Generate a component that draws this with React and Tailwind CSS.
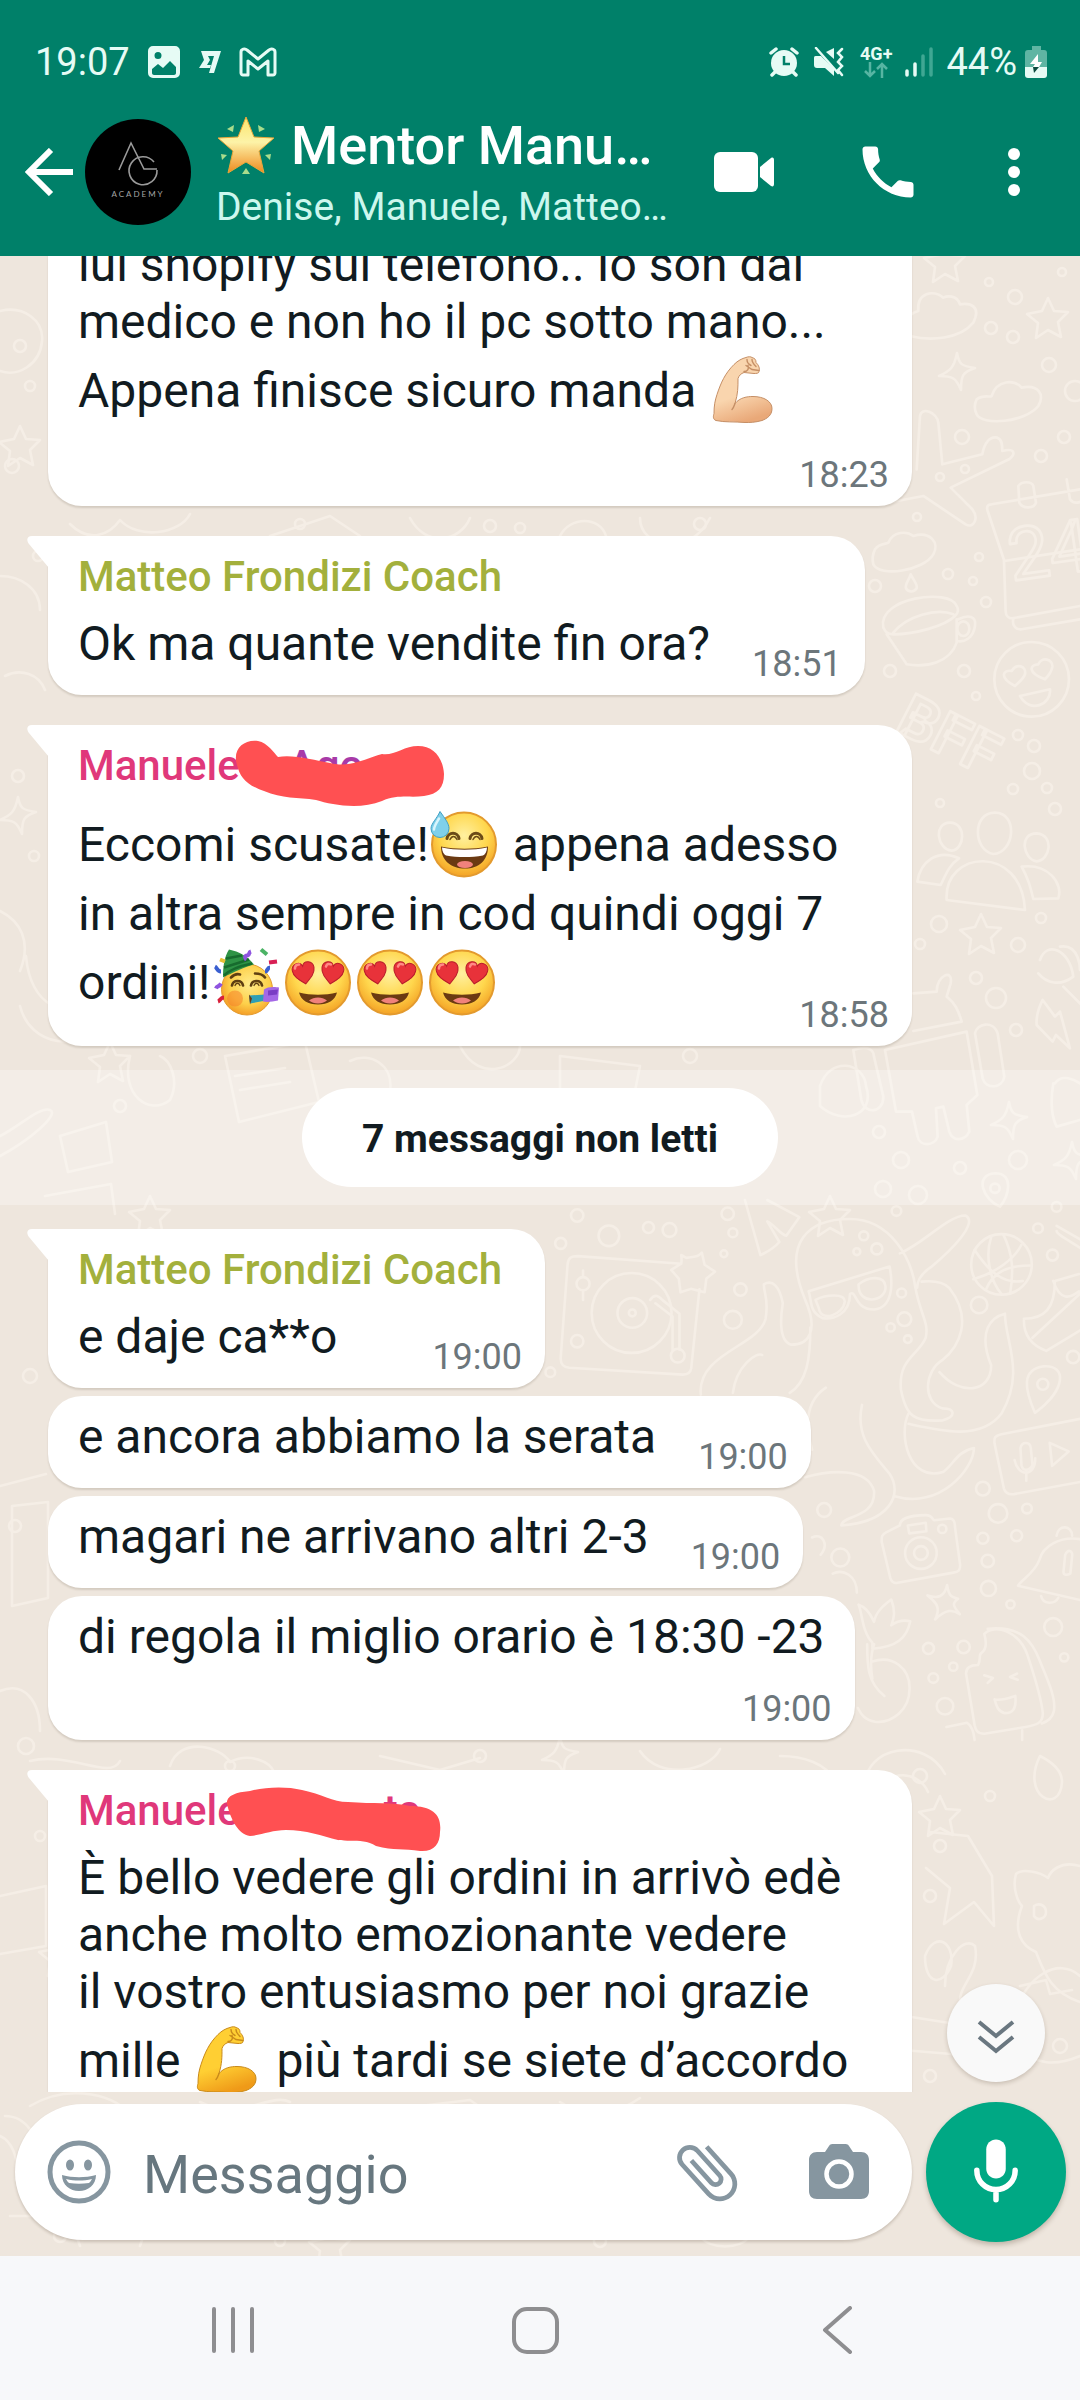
import { useState } from 'react';

const SKIN = {
  light: ['#f9d5ae', '#e9a878', '#c58f66'],
  yellow: ['#ffcf33', '#ef9a18', '#c98a1a'],
};

const Face = ({ id }) => (
  <>
    <defs>
      <radialGradient id={id} cx="50%" cy="36%" r="68%">
        <stop offset="0" stopColor="#fff0a0" />
        <stop offset="0.55" stopColor="#ffd74d" />
        <stop offset="1" stopColor="#f29a1f" />
      </radialGradient>
    </defs>
    <circle cx="35" cy="36" r="32" fill={`url(#${id})`} stroke="#e39a2e" strokeWidth="2" />
  </>
);

const emojiClass = 'inline-block h-[81px] w-[72px] align-[-24px]';

const SweatSmile = () => (
  <svg viewBox="0 0 72 72" role="img" aria-label="sweat smile" className={emojiClass}>
    <Face id="sweat" />
    <g fill="none" stroke="#6b4a17" strokeWidth="3" strokeLinecap="round">
      <path d="M18 30c1-7 11-7 12 0M41 30c1-7 11-7 12 0" />
      <path d="M21 31c2-4 5-4 7 0M44 31c2-4 5-4 7 0" strokeWidth="1.5" />
    </g>
    <path d="M12 38c14 3 33 3 47 0 0 14-9 22-23 22S12 52 12 38z" fill="#6b3a12" />
    <path d="M13 39c14 3 31 3 45 0 0 4-2 7-4 8-12 2-25 2-37 0-2-1-4-4-4-8z" fill="#fff" />
    <ellipse cx="36" cy="56" rx="8" ry="3.5" fill="#f0827c" />
    <path d="M11 3c5 7 9 12 9 17a9 9 0 0 1-18 0C2 15 8 10 11 3z" fill="#7fd0ea" stroke="#3f9fc4" strokeWidth="1" />
    <path d="M10 10c-3 5-5 8-5 11" fill="none" stroke="#d9f5fc" strokeWidth="2.5" strokeLinecap="round" />
  </svg>
);

const HEART = 'M0 13C-6 8-11 4-11-2c0-7 9-9 11-3 2-6 11-4 11 3C11 4 6 8 0 13z';

const HeartEyes = ({ id }) => (
  <svg viewBox="0 0 72 72" role="img" aria-label="heart eyes" className={emojiClass}>
    <Face id={id} />
    <g fill="#e8323a" stroke="#b81c2b" strokeWidth="1">
      <path d={HEART} transform="translate(20.5 24.5) rotate(-10)" />
      <path d={HEART} transform="translate(49.5 24.5) rotate(10)" />
    </g>
    <g fill="none" stroke="#ff8a86" strokeWidth="2.5" strokeLinecap="round">
      <path d="M12 22c0-3 2-4 4-4M43 20c1-3 3-3 5-2" />
    </g>
    <path d="M16 46c12 3 26 3 38 0-2 8-9 12-19 12s-17-4-19-12z" fill="#6b3a12" />
    <path d="M26 54c5-4 13-4 18 0-5 4-13 4-18 0z" fill="#f0827c" />
  </svg>
);

const Party = () => (
  <svg viewBox="0 0 72 72" role="img" aria-label="party" className={emojiClass}>
    <defs>
      <radialGradient id="party" cx="55%" cy="40%" r="65%">
        <stop offset="0" stopColor="#ffeb8a" />
        <stop offset="0.6" stopColor="#fdd04a" />
        <stop offset="1" stopColor="#f29420" />
      </radialGradient>
    </defs>
    <circle cx="36" cy="43" r="25.5" fill="url(#party)" stroke="#e39a2e" strokeWidth="1" />
    <circle cx="24" cy="52" r="8" fill="#f5822a" opacity="0.55" />
    <path d="M18 3c10 2 19 7 25 15-9 2-21 8-31 13 0-10 1-20 6-28z" fill="#2e9345" />
    <path d="M15 12l16-3M13 21l25-8M13 29c7-7 18-10 28-12" fill="none" stroke="#176b2e" strokeWidth="2.5" />
    <g fill="none" stroke="#5f3f12" strokeWidth="2.6" strokeLinecap="round">
      <path d="M21 39c1-6 10-6 11 0M40 39c1-6 10-6 11 0M20 31c3-3 6-4 9-3M44 27c4 0 8 1 10 4" />
      <path d="M24 39c1-3 4-3 5 0M43 39c1-3 4-3 5 0" strokeWidth="1.3" />
    </g>
    <path d="M38 49l16-1 1 6-16 3z" fill="#2f9fb5" />
    <path d="M38 48l3 4-2 6z" fill="#6b3a12" />
    <path d="M53 43c3-3 11-3 15-2l-1 13c-5 1-11 2-15 1z" fill="#a468e6" />
    <path d="M57 44l10-1-1 5-9 1z" fill="#7a3dc4" />
    <g fill="none" strokeWidth="4">
      <path d="M33 13c2-1 0-4 3-4s1-3 4-4" stroke="#8f54e0" />
      <path d="M50 3l6 5" stroke="#4bb365" />
      <path d="M58 16l8-1" stroke="#d81f55" />
      <path d="M54 25c3 0 2-4 5-4" stroke="#3a5fd0" />
      <path d="M4 20c2 1 2 5 6 5" stroke="#3a5fd0" />
      <path d="M5 42c1-3 3-1 5-5" stroke="#8f54e0" />
      <path d="M7 55c3-1 2-4 6-4" stroke="#d8203a" />
      <path d="M9 13l5 2" stroke="#e8c136" />
    </g>
  </svg>
);

const Arm = ({ tone }) => {
  const [top, low, line] = SKIN[tone];
  return (
    <svg viewBox="0 0 72 72" role="img" aria-label="muscle" className={emojiClass}>
      <defs>
        <linearGradient id={`arm-${tone}`} x1="0.2" y1="0" x2="0.5" y2="1">
          <stop offset="0" stopColor={top} />
          <stop offset="0.6" stopColor={top} />
          <stop offset="1" stopColor={low} />
        </linearGradient>
      </defs>
      <path
        d="M26 10c4-4 8-6 12-7 2-1 5-1 6 0 3 1 4 2 4 5 3 3 4 6 3 9 0 2-3 2-5 2l-10-1c-3 1-5 3-6 6 0 9 0 15-3 25 5-6 12-7 18-7 11 0 19 5 19 12 0 7-5 10-10 12-7 2-12 2-17 2-11-1-20 0-29-2-3-1-3-4-2-7 0-8 1-13 3-19 4-12 8-21 17-30z"
        fill={`url(#arm-${tone})`}
        stroke={line}
        strokeWidth="1"
      />
      <path d="M27 49c-1 3-2 5-3 6M36 17c4 0 5-3 4-6M39 5c0 3 2 5 4 6M44 5c0 3 2 5 4 7M38 11l6 4 7 1" fill="none" stroke={line} strokeWidth="1.4" strokeLinecap="round" />
    </svg>
  );
};

const GlowingStar = () => (
  <svg viewBox="0 0 60 60" role="img" aria-label="star" className="h-[60px] w-[60px] shrink-0">
    <defs>
      <linearGradient id="star" x1="0" y1="0" x2="0" y2="1">
        <stop offset="0" stopColor="#fbe56a" />
        <stop offset="0.45" stopColor="#fdf3a8" />
        <stop offset="1" stopColor="#f08a1e" />
      </linearGradient>
    </defs>
    <path d="M30 1l8 20 20 1-15 13 5 22-18-11-18 11 5-22L2 22l20-1z" fill="url(#star)" stroke="#e9a63a" strokeWidth="1" strokeLinejoin="round" />
    <path d="M11 13l7-4-1 7zM49 13l-7-4 1 7zM5 38l6 1-5 5zM55 38l-6 1 5 5zM30 52l4 6h-8z" fill="#a9dc8c" />
  </svg>
);

const STAR = 'M0-20l6 13 14 1-10 10 3 15-13-7-12 8 2-15-11-9 15-3z';
const SPARKLE = 'M0-19c2 11 4 13 18 15C6 0 4 3 4 18-1 6-4 4-18 4-7-1-3-4 0-19z';

const dots = [
  [989, 26, 4], [1062, 16, 4], [1015, 41, 7], [991, 72, 6], [1013, 81, 6], [1049, 109, 7], [962, 181, 7], [1064, 181, 6],
  [1041, 200, 6], [1075, 135, 10], [965, 213, 4], [940, 221, 4], [917, 261, 4], [979, 301, 4], [948, 318, 5], [973, 325, 4],
  [986, 346, 5], [875, 330, 6], [890, 415, 6], [964, 415, 6], [976, 440, 4], [1018, 479, 5], [1034, 490, 6], [1032, 515, 8],
  [1013, 533, 5], [1047, 532, 5], [940, 547, 4], [1055, 553, 6], [939, 668, 8], [1041, 662, 5], [1018, 689, 7], [920, 688, 5],
  [976, 722, 6], [996, 742, 10], [1016, 774, 6], [879, 876, 6], [901, 904, 8], [1018, 904, 9], [960, 912, 6], [918, 939, 9],
  [883, 933, 8], [20, 90, 6], [30, 130, 5], [12, 210, 7], [38, 300, 5], [18, 520, 6], [34, 600, 5], [300, 268, 5],
  [490, 270, 6], [520, 272, 5], [700, 268, 6], [30, 1120, 7], [15, 1270, 6], [26, 1490, 8], [40, 1580, 5], [200, 800, 7],
  [120, 850, 6], [690, 800, 7], [760, 880, 6], [230, 1510, 5], [480, 1500, 6], [920, 1520, 7], [990, 1540, 5],
  [940, 1590, 6], [930, 1640, 6], [1060, 1790, 7], [930, 1820, 6], [60, 1980, 6], [280, 1985, 5], [600, 1985, 6],
];

const deckDots = [
  [108, 45, 18], [60, 126, 16], [200, 104, 30], [315, 80, 16], [376, 87, 20], [545, 40, 18], [560, 95, 13], [534, 156, 10],
  [582, 260, 18], [560, 348, 26], [108, 410, 18], [30, 500, 14], [940, 104, 13], [978, 142, 16], [920, 150, 10], [1050, 270, 13],
  [1058, 346, 20], [1018, 370, 12], [1068, 404, 11], [1035, 32, 14], [1446, 82, 14], [1488, 160, 16], [1500, 20, 14],
  [1275, 305, 24], [1548, 456, 18], [1286, 838, 20], [1330, 910, 27], [1414, 896, 14], [1286, 982, 16], [1384, 975, 16],
  [1300, 1048, 18], [1302, 1128, 22], [1366, 1174, 12], [1128, 1302, 16], [1230, 1298, 18], [1200, 1355, 12], [1142, 1388, 14],
  [1176, 1470, 24], [1490, 1240, 26], [1522, 1328, 12], [825, 900, 20], [872, 1038, 26],
];

const Wallpaper = () => (
  <svg
    viewBox="0 0 1080 2000"
    preserveAspectRatio="xMidYMin slice"
    aria-hidden="true"
    className="absolute inset-0 h-full w-full bg-[#eee6dd]"
    fill="none"
    stroke="#f5eee6"
    strokeWidth="2.6"
    strokeLinecap="round"
    strokeLinejoin="round"
  >
    {dots.map(([x, y, r]) => (
      <circle key={`${x}-${y}`} cx={x} cy={y} r={r} />
    ))}
    {[[945, 6], [1048, 62], [981, 678], [20, 190], [110, 806], [150, 960], [830, 960], [60, 1700], [940, 1560], [330, 1990]].map(([x, y]) => (
      <path key={`${x}-${y}`} d={STAR} transform={`translate(${x} ${y})`} />
    ))}
    {[[957, 116], [1009, 865], [1072, 905], [18, 560], [560, 1500]].map(([x, y]) => (
      <path key={`${x}-${y}`} d={SPARKLE} transform={`translate(${x} ${y})`} />
    ))}

    {/* clouds, plane, calendar, cup, smiley */}
    <g transform="translate(860 0) scale(.3333)" strokeWidth="8">
      <path d="M150 240c60 15 150 10 190-40 25-50-10-60-40-55-10-30-40-25-50-20-30-25-80-15-75 40-40 10-50 60-25 75z" />
      <path d="M350 430c20-15 40-5 45-10 15-50 70-50 90-25 50-10 70 20 50 55-40 50-170 60-185 25-10-20-5-35 0-45z" />
      <path d="M45 880c15-20 35-15 40-20 15-35 55-35 75-20 50-15 80 20 60 55-30 50-160 70-180 30-5-20 0-35 5-45z" />
      <path d="M170 640l10-160c5-30 50-10 55 20l12 125 120-30c5-30 20-55 45-50 15 5 15 25 15 40 40-10 40 10 20 25l-175 85 65 65c20 25 5 60-20 45L190 720 60 745" />
      <path d="M660 700l-265 45c-15 0-15 10-12 20l50 150 227-35M432 915l5 150c0 15 10 22 20 22l203-37M460 1090c-5 20 10 32 25 30l175-30M475 690c10-15 40-15 45 0l8 50c-5 18-40 20-50 0zM620 670l10 60c10 15 30 10 35 5" />
      <path d="M70 1115c-20-90 200-120 220-65 10 15 0 25-5 30-30 30-120 55-185 55-20 0-25-10-30-20zM80 1135l60 90c60 10 130-5 150-65v-70M295 1090c30-15 55-10 50 20-5 35-30 50-55 45M100 1130c40-50 130-75 180-55" />
      <ellipse cx="310" cy="1118" rx="18" ry="22" />
      <path d="M152 955c10 20 22 32 18 42-10 15-28 10-32 0-4-12 8-22 14-42z" />
      <circle cx="515" cy="1270" r="112" />
      <path d="M465 1290c-50-25-35-50-10-45 15-25 45-15 40 10-5 15-20 25-30 35zM555 1270c-55-20-45-45-20-45 10-25 45-15 42 8-3 17-12 27-22 37zM480 1320l90-20c5 45-60 75-90 20z" />
      <text x="455" y="975" fontSize="220" fontFamily="Roboto" transform="rotate(-8 455 975)">24</text>
    </g>

    {/* friends, robot, bolt, pin */}
    <g transform="translate(860 434) scale(.3333)" strokeWidth="8">
      <text x="100" y="120" fontSize="180" fontWeight="700" fontFamily="Roboto" transform="rotate(27 100 120)">BFF</text>
      <path d="M405 368c70 0 60 120-5 124-60-10-65-124 5-124zM270 398c50 0 45 80 5 84-45-5-55-84-5-84zM530 430c55 5 40 82 0 84-40-5-55-84 0-84z" />
      <path d="M260 630c-10-150 225-170 235 30z M172 575c10-60 60-100 125-70-30 20-40 50-55 80zM485 530c80-10 125 50 110 95l-75 2c-10-40-15-60-35-97z" />
      <path d="M75 1080l245-55 32 190-32 30 8 80c-15 30-50 30-60 0l-18-75-22 5 5 85c-10 30-55 30-60 0l-17-75h-48zM160 910l70-5c0-50 50-70 42-25l-12 40c25 20 35 40 45 75l-145 28M345 1030c5-30 55-40 68 0l20 130c-5 35-55 40-65 5zM-20 1080c30-10 60-10 62 20l28 120c0 50-55 55-66 10z" />
      <path d="M548 930c-15 30-20 50-18 75l48 50 10-20 42 40-30-110-15 15zM405 1450c60 0 40 70 15 100-50-20-80-95-15-100z" />
      <circle cx="405" cy="1495" r="14" />
      <path d="M600 770c60-10 60 70 60 70M540 810c20-60 90-30 100 50-40 30-80 20-105-10M610 890l60 60M585 1180c20-30 60-10 75 0M580 1180c-10 60-5 100 10 130l70-20" />
    </g>

    {/* turntable, octopus, ball, camera, bell */}
    <g transform="translate(540 944) scale(.3444)" strokeWidth="7.5">
      {deckDots.map(([x, y, r]) => (
        <circle key={`${x}-${y}`} cx={x} cy={y} r={r} />
      ))}
      <path d="M410 185L110 163c-20 0-28 5-30 25L60 460c0 20 10 25 25 27l330 20c15 0 22-5 24-18l24-230M410 185c5-30-10-30 15-17 25-5 30 0 45-15l8 35 30 20-25 20-5 40-40-10-30 10-5-40-22-25z" />
      <circle cx="266" cy="328" r="116" />
      <circle cx="268" cy="328" r="43" />
      <circle cx="268" cy="328" r="10" />
      <circle cx="125" cy="243" r="19" />
      <path d="M125 205v18M125 262v28M320 290c15-20 25-10 35 0l50 40v105M335 300l50 38v98" />
      <circle cx="400" cy="452" r="20" />
      <path d="M595 0l45 160c20-10 35-15 55-38l-35-60c15 5 40 40 55 42l38-54L660 0" />
      <path d="M770 290C700 120 780 55 900 55c120 0 180 120 190 200 15 80 40 100 30 145-20 50-80 60-72 150 15 80 40 95 120 90 40-10 40-35 0-35-60-20-50-110 0-140 50-40 90-120 20-210-20-20-60-20-80-18M770 290c40 90 10 130-40 130-40-10-30-90-25-120-10-50-30-70-55-55 0 30 15 40 5 100-20 80-200 100-188 220M785 370c0 90-10 160-60 190M560 560c10-80 70-120 85-110M1045 155c70-30 140-110 190-110 40 20-40 100-100 150-30 20-40 40-40 60M1160 500c60 70 150 60 150-20-40-100 0-140 40-150 0 80 60 170-10 290-60 80-180 50-270 30M1070 620c-30 60 0 200 100 170 30-20 40-60 90-70 0 60-100 180-230 140M830 545c-60 40-60 110-40 180M935 595c-20 90 30 140 80 200 40 60 0 140-140 150 0-30 100-20 95-100-20-70-130-60-200-40" />
      <path d="M780 265l235-72c10 50 10 120-45 125-60 0-50-60-70-45 0 60-50 75-80 70-40-20-30-50-40-78zM800 290c30-15 85-20 85 5-5 40-70 60-75 20zM925 245c30-25 75-25 78 5 5 45-80 60-78-5z" />
      <circle cx="1340" cy="187" r="88" />
      <path d="M1345 100c30 60 30 110 20 172M1262 145c40 60 80 100 140 90M1258 230c70-20 120-60 140-100M1310 108c-20 60 0 130 30 165M1425 190c-70 0-110 20-130 70" />
      <path d="M1005 965l40-20c0-20 30-30 75-30 20 0 20 15 25 15l45-5c15 0 15 15 15 25l15 110c0 15-5 20-20 22l-165 30c-10 0-15-5-18-15l-25-105c0-15 0-20 13-27zM1068 945l52-8 2 25-50 6z" />
      <circle cx="1106" cy="1025" r="46" />
      <circle cx="1106" cy="1025" r="20" />
      <circle cx="1168" cy="955" r="12" />
      <path d="M1182 1118c5 30 10 35 32 40-22 15-10 25 5 45-20-15-40-15-72 15 15-30 10-45-22-70 30 10 50 5 57-30z" />
      <path d="M1570 985c-60-10-110 20-120 60-15 40-50 55-62 75l182 42M1500 975c5-35 45-30 45 0M1525 1030c10-20 22-10 20 5l-5 50c-10 5-20 5-20-5zM1455 1150c5 25 40 25 50 5" />
      <path d="M1570 635l-230 45c-20 5-22 10-20 28l27 130c5 15 15 18 30 16l195-36M1395 720c5-20 28-18 30 0l5 50c-10 18-28 18-32 0zM1378 755c10 50 60 50 60-5M1412 790v25M1480 705l55 25-48 42z" />
      <path d="M1462 483c70-5 65 70-25 135-30-70-40-125 25-135z" />
      <circle cx="1460" cy="535" r="16" />
      <path d="M1500 75l70 40M1500 90c0 10 40 30 70 50M1405 345c60 0 90-30 90-110l70-20M1405 350c0 50 30 75 65 88l100-60M1430 400l140-130M1490 235c20 60 50 50 75 30" />
      <path d="M1290 1260c30-30 100-10 125 60 20 60 40 120 45 170 0 30-20 35-50 40l-120 20c-20 0-25-10-28-25l-25-150c0-15 10-25 35-25 10-15 0-30 10-35 15-10 15-30 8-55zM1300 1245c100-10 130 40 150 90 20 50 50 110 42 150-5 20-20 30-35 35M1290 1380l25 8-15 14M1385 1375l-20 10 22 8M1320 1450c20 5 45-5 60-10 5 40-10 50-30 50-20-5-25-20-30-40" />
      <path d="M965 1285c-30-30-30-90-40-110 30 10 40 40 45 50 5-30 30-50 50-65 15 40 5 60 0 75 20-15 40-15 55-12-10 50-40 75-110 80zM950 1290c0 60 0 110 50 150M970 1290c-10 30-10 70-5 100M965 1340c60-20 110 20 108 80 0 60-50 100-100 95-30-5-40-20-50-40M920 1140c0-50-40-70-70-55M790 980c30-15 50 20 25 50M1180 1530l60-12c15 10 20 30 22 50M1400 1540v28" />
    </g>

    {/* cat, cactus, teddy in the lower corner */}
    <path d="M1080 1610c-20-6-30 6-32 12-8-6-26-10-32-4-4 14 2 28 6 32-10 26 0 40 14 46 8 20 14 40 44 50M1034 1650c6-4 12 0 12 6s-8 10-12 4zM930 1576l38 4 24 40 2 50-20-24-30 22 6-36-24-20M925 1700c10-26 30-14 26 10-8 20-26 20-26-10zM945 1730c0-30 20-50 30-40 6 30-20 40-14 60M905 1760l64 10 6 30-72-6zM1014 1760c12-40 44-60 66-40M1016 1790c20 20 40 20 64 10M1020 1730l26-6 4 14 22-4" />
    <path d="M865 1530c0-40 60-50 80-12M880 1540c6-30 40-24 48-4M780 1500c20 0 50 6 56 30M1040 1500c-20 40 20 60 22 26 0-14-14-22-22-26z" />

    {/* peeking out along the left edge and between bubbles */}
    <path d="M0 55c24-6 44 10 42 30-2 24-24 36-42 30M0 320c20 0 40 12 40 34M5 420c16-8 34-2 40 14M0 655c20 10 32 30 20 60M20 750c10 40 60 50 90 10M26 700c4 50 40 66 66 40M0 1230l46-12M12 1250l36-4v96l-36 8zM0 1435c24-10 40 10 40 40M0 1640l46-10v60l-46 8M5 1860c20 0 36 20 34 50M0 1880c10 4 20 20 16 44M10 1960h60l10 30M180 1976l50 6" />
    <path d="M70 268c20 20 40 10 50-4 18 20 60 14 70-6M270 280l60-20 30 20M410 262c16 30 50 24 60 0M560 280c10-20 40-20 46 0M640 262c0 30 50 40 70 0M225 800l80-14 14 60-80 20zM235 820l50-8M240 834l50-8M350 805c20-10 44 4 40 30M460 790c20 40 60 20 60 0M560 800l80 10-10 50-70-10zM60 880l46-14 6 40-44 10zM130 800c-10 40 20 60 40 44 10-20 0-40-10-44M0 880c20-10 40-30 50-26s-20 30-50 46M45 940l66-12 4 30M560 700l20 20M820 830c10-30 44-24 46 0 10 30-24 40-46 20z" />
    <path d="M30 1505c40-10 80 20 90 0M170 1510c10-30 50-20 60-4 20-10 40 0 44 10M380 1500l60 14 40-12M640 1495c20 30 70 20 80-2M30 1850c40-24 90-10 100 10M200 1846c40 20 70-10 90 0M420 1850l50-6 20 14M560 1846c30 20 60 10 80-4M140 1990l4-12 64-4M700 1980c10 14 40 14 50 0" />
  </svg>
);

const groups = [
  {
    id: 1,
    messages: [
      { wide: true, time: '18:23', stacked: true, lines: ['lui shopify sul telefono.. Io son dal', 'medico e non ho il pc sotto mano...', <>Appena finisce sicuro manda <Arm tone="light" /></>] },
    ],
  },
  { id: 2, name: 'matteo', messages: [{ time: '18:51', lines: ['Ok ma quante vendite fin ora?'] }] },
  {
    id: 3,
    name: 'manuele',
    scribble: 'M7 28C2 12 14 2 28 4c10 2 16 12 20 16 14-3 36 3 52 6 20 5 34-4 52-9 12 2 22-8 36-8 16 0 25 12 26 28 0 14-6 20-20 22-14 2-26-2-42 5-22 9-50 4-66-1-18-3-34-1-52-9C16 48 10 40 7 28z',
    peek: 'Ago',
    messages: [
      { wide: true, time: '18:58', lines: [<>Eccomi scusate!<SweatSmile /> appena adesso</>, 'in altra sempre in cod quindi oggi 7', <>ordini!<Party /><HeartEyes id="love-a" /><HeartEyes id="love-b" /><HeartEyes id="love-c" /></>] },
    ],
  },
];

const unread = [
  {
    id: 4,
    name: 'matteo',
    messages: [
      { time: '19:00', lines: ['e daje ca**o'] },
      { time: '19:00', lines: ['e ancora abbiamo la serata'] },
      { time: '19:00', lines: ['magari ne arrivano altri 2-3'] },
      { time: '19:00', stacked: true, lines: ['di regola il miglio orario è 18:30 -23'] },
    ],
  },
  {
    id: 5,
    name: 'manuele',
    scribble: 'M-3 22C-4 12 10 10 20 9 34 5 56 4 72 8c20 4 30 12 46 12 26 2 44 0 62 4 24 0 32 10 30 26 0 12-6 20-20 19-16-3-26 0-44-5-12-8-26-4-38-6C92 54 76 48 56 48c-14 0-24 5-36 6C8 52 1 38-3 22z',
    peek: 'to',
    messages: [
      { wide: true, time: '19:05', stacked: true, lines: ['È bello vedere gli ordini in arrivò edè', 'anche molto emozionante vedere', 'il vostro entusiasmo per noi grazie', <>mille <Arm tone="yellow" /> più tardi se siete d’accordo</>] },
    ],
  },
];

const Sender = ({ group }) => {
  if (group.name === 'matteo') {
    return <div className="mb-[10px] pr-5 text-[42px] leading-[57px] font-medium text-[#a3b03c]">Matteo Frondizi Coach</div>;
  }
  return (
    <div className="mb-[10px] text-[42px] leading-[57px] font-medium text-[#e0387a]">
      Manuele
      <span className={group.peek === 'Ago' ? 'ml-12 text-[#a83aa8]' : 'ml-36'}>{group.peek}</span>
      <svg viewBox="0 0 216 72" aria-hidden="true" className="absolute top-3 left-[182px] h-[72px] w-[216px] overflow-visible">
        <path d={group.scribble} fill="#ff5052" />
      </svg>
    </div>
  );
};

const Time = ({ children }) => <time className="text-[36px] leading-[36px] text-[#6c767b]">{children}</time>;

const Bubble = ({ message, group, first }) => {
  const tail = first && group.name;
  const last = message.lines.length - 1;

  return (
    <div
      className={`relative max-w-full rounded-[34px] bg-white pt-3 pr-[23px] pb-[13px] pl-[30px] shadow-[0_2px_2px_rgba(60,40,20,0.14)] ${
        message.wide ? 'w-full' : 'w-fit'
      } ${tail ? 'rounded-tl-none' : ''}`}
    >
      {tail && (
        <svg viewBox="0 0 22 32" aria-hidden="true" className="absolute top-0 -left-[21px] h-8 w-[22px]">
          <path d="M22 0H5C0 0-1 4 2 8l20 24z" fill="#fff" />
        </svg>
      )}
      {tail && <Sender group={group} />}
      {message.lines.map((line, index) => (
        <div key={index} className="flex items-end justify-between gap-[35px] text-[48px] leading-[57px] whitespace-nowrap text-[#111b21]">
          <p className={index === last && !message.stacked ? 'mb-[10px] pr-[7px]' : 'pr-[7px]'}>{line}</p>
          {index === last && !message.stacked && <Time>{message.time}</Time>}
        </div>
      ))}
      {message.stacked && (
        <div className="flex h-[62px] items-end justify-end">
          <Time>{message.time}</Time>
        </div>
      )}
    </div>
  );
};

const Group = ({ group }) => (
  <section className="flex flex-col gap-2 pr-[168px] pl-12">
    {group.messages.map((message, index) => (
      <Bubble key={index} message={message} group={group} first={index === 0} />
    ))}
  </section>
);

const StatusBar = () => (
  <div className="flex h-[86px] items-center justify-between pt-[38px] pr-[33px] pl-[35px] text-[38px] leading-[48px] text-[#e6fbf5]">
    <div className="flex items-center">
      <span>19:07</span>
      <svg viewBox="0 0 32 32" aria-hidden="true" className="ml-[18px] h-8 w-8">
        <path fillRule="evenodd" fill="#e6fbf5" d="M5 0h22a5 5 0 0 1 5 5v22a5 5 0 0 1-5 5H5a5 5 0 0 1-5-5V5a5 5 0 0 1 5-5zM4 23v4c0 1 1 2 2 2h20c1 0 2-1 2-2v-6l-6-6-7 7-5-4zM10 6a3.500 3.500 0 1 0 0 7 3.500 3.500 0 0 0 0-7z" />
      </svg>
      <svg viewBox="0 0 22 24" aria-hidden="true" className="ml-[19px] h-6 w-[22px]">
        <path fill="#e6fbf5" d="M2 1h20l-7 22h-5l5-17H9l2 4-3 5h4l-1 3H0l5-8z" />
      </svg>
      <svg viewBox="0 0 38 30" aria-hidden="true" className="ml-[18px] h-[30px] w-[38px]">
        <path fill="none" stroke="#e6fbf5" strokeWidth="3" strokeLinejoin="round" d="M2 26V5c0-3 4-4 6-2l11 9L30 3c2-2 6-1 6 2v21c0 1-1 2-2 2h-5V14l-10 8-10-8v14H4c-1 0-2-1-2-2z" />
      </svg>
    </div>
    <div className="flex items-center">
      <svg viewBox="0 0 30 30" aria-hidden="true" className="h-[30px] w-[30px]">
        <g stroke="#e6fbf5" strokeWidth="3.500" strokeLinecap="round">
          <path d="M2 6l5-4M28 6l-5-4M6 25l-3 3M24 25l3 3" />
        </g>
        <circle cx="15" cy="16" r="13" fill="#e6fbf5" />
        <path d="M15 9v8h6" fill="none" stroke="#008069" strokeWidth="2.500" />
      </svg>
      <svg viewBox="0 0 32 30" aria-hidden="true" className="ml-[14px] h-[30px] w-8">
        <path d="M21 1v11l-8-7zM1 11c0-2 1-2 3-2h4l13 13v7l-9-8H4c-2 0-3-1-3-3z" fill="#e6fbf5" />
        <path d="M3 1l22 25M29 2l-4 4 4 4-4 5 4 4-4 4 4 5" fill="none" stroke="#e6fbf5" strokeWidth="2.500" strokeLinecap="round" />
      </svg>
      <div className="ml-[15px] flex flex-col items-center text-[18px] leading-4 font-bold">
        4G+
        <svg viewBox="0 0 24 16" aria-hidden="true" className="h-4 w-6" fill="none" stroke="#57b5a3" strokeWidth="2.500">
          <path d="M6 0v14M1 9l5 5 5-5M18 16V2M13 7l5-5 5 5" />
        </svg>
      </div>
      <svg viewBox="0 0 28 30" aria-hidden="true" className="ml-[13px] h-[30px] w-7" strokeWidth="3.500" strokeLinecap="round">
        <path d="M2 24v4M10 17v11" stroke="#e6fbf5" />
        <path d="M18 9v19M26 2v26" stroke="#3fa793" />
      </svg>
      <span className="ml-[13px]">44%</span>
      <svg viewBox="0 0 22 32" aria-hidden="true" className="ml-2 h-8 w-[22px]">
        <path d="M7 0h9v4h3c2 0 3 1 3 3v14H0V7c0-2 1-3 3-3h4z" fill="#5fb5a3" />
        <path d="M0 21h22v8c0 2-1 3-3 3H3c-2 0-3-1-3-3z" fill="#e6fbf5" />
        <path d="M13 8L5 18h5l-2 3h6l3-5h-4z" fill="#fff" />
        <path d="M8 21h6l-5 6z" fill="#0b4a3f" />
      </svg>
    </div>
  </div>
);

const Header = () => (
  <header className="shrink-0 bg-[#008069]">
    <StatusBar />
    <div className="flex h-[170px] items-center pt-[2px] pr-[50px] pl-[25px]">
      <button type="button" aria-label="Indietro">
        <svg viewBox="0 0 48 48" className="h-12 w-12" fill="none" stroke="#fff" strokeWidth="6">
          <path d="M48 24H5M26 2L4 24l22 22" />
        </svg>
      </button>
      <svg viewBox="0 0 106 106" aria-label="AG Academy" role="img" className="ml-3 h-[106px] w-[106px] shrink-0">
        <circle cx="53" cy="53" r="53" fill="#000" />
        <g fill="none" stroke="#9a9a9a" strokeWidth="1.600">
          <path d="M34 51l12-27 13 26h13M69 43a14 14 0 1 0 3 8" />
        </g>
        <text x="53" y="78" fill="#a5a5a5" fontSize="8" fontFamily="Lato" letterSpacing="2" textAnchor="middle">ACADEMY</text>
      </svg>
      <div className="ml-[25px] min-w-0 flex-1 pt-[6px]">
        <div className="flex items-center gap-[15px] text-white">
          <GlowingStar />
          <h1 className="text-[54px] leading-[64px] font-medium whitespace-nowrap">Mentor Manu…</h1>
        </div>
        <p className="text-[39px] leading-[58px] whitespace-nowrap text-[#cdf7ee]">Denise, Manuele, Matteo…</p>
      </div>
      <button type="button" aria-label="Videochiamata">
        <svg viewBox="0 0 60 40" className="h-10 w-[60px]" fill="#fff">
          <rect width="44" height="40" rx="6" />
          <path d="M46 15L57 6c2-1 3 0 3 2v24c0 2-1 3-3 2l-11-9z" />
        </svg>
      </button>
      <button type="button" aria-label="Chiama" className="ml-20">
        <svg viewBox="0 0 24 24" className="h-[68px] w-[68px]" fill="#fff">
          <path d="M6.620 10.790c1.440 2.830 3.760 5.140 6.590 6.590l2.200-2.200c.27-.27.67-.36 1.020-.24 1.120.37 2.330.57 3.570.57.55 0 1 .45 1 1V20c0 .55-.45 1-1 1-9.390 0-17-7.610-17-17 0-.55.45-1 1-1h3.500c.55 0 1 .45 1 1 0 1.250.2 2.450.57 3.570.11.35.03.74-.25 1.020l-2.200 2.200z" />
        </svg>
      </button>
      <button type="button" aria-label="Altre opzioni" className="ml-[76px]">
        <svg viewBox="0 0 32 52" className="h-[52px] w-8" fill="#fff">
          <circle cx="16" cy="8" r="6" />
          <circle cx="16" cy="26" r="6" />
          <circle cx="16" cy="44" r="6" />
        </svg>
      </button>
    </div>
  </header>
);

const Composer = () => {
  const [text, setText] = useState('');

  return (
    <form className="relative flex shrink-0 items-center gap-[14px] pt-[10px] pr-[14px] pb-[14px] pl-[15px]">
      <div className="flex h-[136px] min-w-0 flex-1 items-center rounded-full bg-white pr-[43px] pl-8 shadow-[0_2px_3px_rgba(60,40,20,0.2)]">
        <button type="button" aria-label="Emoji">
          <svg viewBox="0 0 64 64" className="h-16 w-16">
            <circle cx="32" cy="32" r="29" fill="none" stroke="#8696a0" strokeWidth="5" />
            <ellipse cx="23" cy="25" rx="4" ry="5.500" fill="#8696a0" />
            <ellipse cx="41" cy="25" rx="4" ry="5.500" fill="#8696a0" />
            <path d="M15 35c11 3 23 3 34 0 0 10-8 16-17 16s-17-6-17-16z" fill="#8696a0" />
            <path d="M19 39c9 2 17 2 26 0-1 2-2 3-3 4-7 1-13 1-20 0-1-1-2-2-3-4z" fill="#fff" />
          </svg>
        </button>
        <input
          type="text"
          aria-label="Messaggio"
          placeholder="Messaggio"
          value={text}
          onChange={(e) => setText(e.target.value)}
          className="ml-8 min-w-0 flex-1 bg-transparent pt-[6px] text-[54px] leading-[64px] text-[#111b21] outline-none placeholder:text-[#67777f]"
        />
        <button type="button" aria-label="Allega">
          <svg viewBox="0 0 24 24" className="h-[76px] w-[76px]" fill="#8696a0">
            <path
              transform="rotate(-42 12 12)"
              d="M16.500 6v11.500c0 2.210-1.790 4-4 4s-4-1.790-4-4V5a2.500 2.500 0 0 1 5 0v10.500c0 .55-.45 1-1 1s-1-.45-1-1V6H10v9.500a2.500 2.500 0 0 0 5 0V5c0-2.210-1.790-4-4-4S7 2.790 7 5v12.500c0 3.040 2.460 5.500 5.500 5.500s5.500-2.460 5.500-5.500V6h-1.500z"
            />
          </svg>
        </button>
        <button type="button" aria-label="Fotocamera" className="ml-16">
          <svg viewBox="0 0 60 60" className="h-[60px] w-[60px]">
            <path d="M16 10l4-6c1-2 3-2 5-2h10c2 0 4 0 5 2l4 6h8c5 0 8 3 8 8v31c0 5-3 8-8 8H8c-5 0-8-3-8-8V18c0-5 3-8 8-8z" fill="#8696a0" />
            <circle cx="30" cy="32" r="12.500" fill="none" stroke="#fff" strokeWidth="4.500" />
          </svg>
        </button>
      </div>
      <button type="button" aria-label="Messaggio vocale" className="flex h-[140px] w-[140px] items-center justify-center rounded-full bg-[#00a884] shadow-[0_3px_5px_rgba(60,40,20,0.25)]">
        <svg viewBox="0 0 24 24" className="h-[78px] w-[78px]" fill="#fff">
          <path d="M12 14c1.660 0 3-1.340 3-3V5c0-1.660-1.340-3-3-3S9 3.340 9 5v6c0 1.660 1.340 3 3 3z" />
          <path d="M6.100 11.500a5.900 5.900 0 0 0 11.800 0M12 17.500v3" fill="none" stroke="#fff" strokeWidth="1.700" strokeLinecap="round" />
        </svg>
      </button>
    </form>
  );
};

const NavBar = () => (
  <nav className="grid h-[144px] shrink-0 grid-cols-3 items-center justify-items-center bg-[#f7f8fa] pt-1 pr-[92px] pl-[82px]">
    <button type="button" aria-label="Recenti">
      <svg viewBox="0 0 48 48" className="h-12 w-12" stroke="#8e8e90" strokeWidth="4" strokeLinecap="round">
        <path d="M5 3v42M24 3v42M43 3v42" />
      </svg>
    </button>
    <button type="button" aria-label="Home">
      <svg viewBox="0 0 48 48" className="h-12 w-12" fill="none" stroke="#8e8e90" strokeWidth="4">
        <rect x="3" y="3" width="43" height="43" rx="13" />
      </svg>
    </button>
    <button type="button" aria-label="Indietro">
      <svg viewBox="0 0 48 48" className="h-12 w-12" fill="none" stroke="#8e8e90" strokeWidth="4" strokeLinecap="round" strokeLinejoin="round">
        <path d="M37 2L12 24l25 22" />
      </svg>
    </button>
  </nav>
);

const App = () => (
  <div className="flex h-screen flex-col overflow-hidden font-['Roboto',sans-serif]">
    <Header />
    <main className="relative flex min-h-0 flex-1 flex-col">
      <Wallpaper />
      <div className="relative min-h-0 flex-1 overflow-hidden">
        {/* Scrolled so the oldest visible message starts above the header */}
        <div className="-mt-8 flex flex-col gap-[30px]">
          {groups.map((group) => (
            <Group key={group.id} group={group} />
          ))}
          <div className="-my-[6px] flex justify-center bg-white/30 py-[18px]">
            <div className="rounded-full bg-white px-[60px] pt-[27px] pb-[23px] text-[39px] leading-[49px] font-bold text-[#111b21]">7 messaggi non letti</div>
          </div>
          {unread.map((group) => (
            <Group key={group.id} group={group} />
          ))}
        </div>
      </div>
      <Composer />
      <button
        type="button"
        aria-label="Vai in fondo"
        className="absolute right-[35px] bottom-[174px] flex h-[98px] w-[98px] items-center justify-center rounded-full bg-[#f9f9f9] shadow-[0_2px_4px_rgba(60,40,20,0.2)]"
      >
        <svg viewBox="0 0 40 36" className="mt-2 h-9 w-10" fill="none" stroke="#6a7780" strokeWidth="4">
          <path d="M3 3l17 14L37 3M3 18l17 14 17-14" />
        </svg>
      </button>
    </main>
    <NavBar />
  </div>
);

export default App;
